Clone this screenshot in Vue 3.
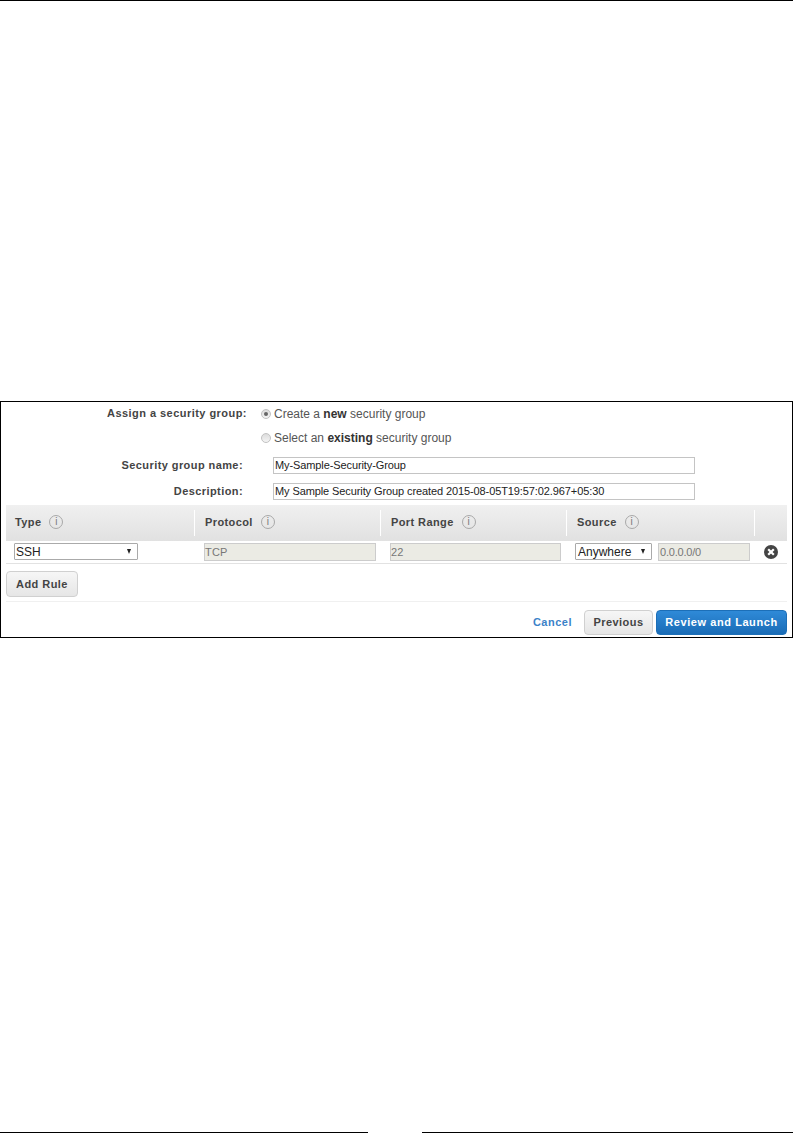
<template>
  <div class="page">
    <div class="top-rule"></div>
    <div class="frame">
      <div class="form-row radio-row first">
        <label class="field-label wide">Assign a security group:</label>
        <span class="radio checked"></span>
        <span class="radio-text">Create a <b>new</b> security group</span>
      </div>
      <div class="form-row radio-row second">
        <span class="field-label wide"></span>
        <span class="radio"></span>
        <span class="radio-text">Select an <b>existing</b> security group</span>
      </div>
      <div class="form-row input-row name-row">
        <label class="field-label">Security group name:</label>
        <div class="text-input">{{ groupName }}</div>
      </div>
      <div class="form-row input-row">
        <label class="field-label">Description:</label>
        <div class="text-input">{{ description }}</div>
      </div>

      <div class="rules-head">
        <div v-for="col in columns" :key="col.cls" class="head-cell" :class="col.cls">
          <span class="head-name">{{ col.name }}</span>
          <span v-if="col.name" class="info">i</span>
        </div>
      </div>
      <div class="rules-row">
        <div class="cell col-type">
          <div class="select type-select"><span>SSH</span><i class="caret"></i></div>
        </div>
        <div class="cell col-protocol"><div class="readonly">TCP</div></div>
        <div class="cell col-port"><div class="readonly port">22</div></div>
        <div class="cell col-source">
          <div class="select source-select"><span>Anywhere</span><i class="caret"></i></div>
          <div class="readonly cidr">0.0.0.0/0</div>
        </div>
        <div class="cell col-remove">
          <svg class="remove" viewBox="0 0 14 14">
            <circle cx="7" cy="7" r="7" fill="#444"/>
            <path d="M4.2 4.2l5.6 5.6M9.8 4.2l-5.6 5.6" stroke="#fff" stroke-width="2.2" fill="none"/>
          </svg>
        </div>
      </div>
      <div class="add-row">
        <button class="btn add-btn">Add Rule</button>
      </div>
      <div class="actions">
        <a class="cancel">Cancel</a>
        <button class="btn prev-btn">Previous</button>
        <button class="btn launch-btn">Review and Launch</button>
      </div>
    </div>
    <div class="bottom-rule">
      <span></span>
      <span></span>
    </div>
  </div>
</template>

<script setup>
const groupName = 'My-Sample-Security-Group'
const description = 'My Sample Security Group created 2015-08-05T19:57:02.967+05:30'

const columns = [
  { name: 'Type', cls: 'col-type' },
  { name: 'Protocol', cls: 'col-protocol' },
  { name: 'Port Range', cls: 'col-port' },
  { name: 'Source', cls: 'col-source' },
  { name: '', cls: 'col-remove' }
]
</script>

<style scoped>
.page {
  width: 793px;
  height: 1142px;
  display: flex;
  flex-direction: column;
  background: #fff;
  font-family: "Liberation Sans", Arial, sans-serif;
  font-size: 11px;
  color: #444;
  overflow: hidden;
}

.top-rule {
  height: 1px;
  background: #000;
}

.frame {
  box-sizing: border-box;
  width: 793px;
  height: 237px;
  margin-top: 400px;
  border: 1px solid #000;
  padding: 0 5px;
}

.form-row {
  display: flex;
  align-items: center;
}

.field-label {
  width: 237px;
  padding-bottom: 2px;
  text-align: right;
  font-weight: bold;
  color: #444;
  letter-spacing: 0.42px;
  flex: none;
}

.field-label.wide {
  width: 241px;
  letter-spacing: 0.46px;
}

.radio-row {
  height: 16px;
}

.radio-row.first {
  margin-top: 4px;
}

.radio-row.second {
  margin-top: 8px;
}

.radio {
  box-sizing: border-box;
  width: 10px;
  height: 10px;
  margin-left: 14px;
  border-radius: 50%;
  border: 1px solid #c2c2c2;
  background: linear-gradient(#dcdcdc, #f4f4f4);
  flex: none;
  position: relative;
}

.radio.checked::after {
  content: "";
  position: absolute;
  left: 2px;
  top: 2px;
  width: 4px;
  height: 4px;
  border-radius: 50%;
  background: #666;
}

.radio-text {
  margin-left: 3px;
  font-size: 12px;
  color: #555;
}

.radio-text b {
  color: #333;
}

.input-row {
  height: 17px;
  margin-top: 9px;
}

.name-row {
  margin-top: 11px;
}

.text-input {
  box-sizing: border-box;
  width: 422px;
  height: 17px;
  margin-left: 30px;
  padding: 0 1px;
  line-height: 15px;
  border: 1px solid #c4c4c4;
  color: #222;
  letter-spacing: -0.1px;
}

.rules-head {
  display: flex;
  height: 36px;
  margin-top: 5px;
  background: linear-gradient(#f0f0f0, #e1e1e1);
}

.head-cell {
  display: flex;
  align-items: center;
  box-sizing: border-box;
  height: 26px;
  margin-top: 5px;
  padding-left: 10px;
  padding-bottom: 2px;
  border-right: 1px solid #fff;
}

.head-cell.col-type {
  padding-left: 9px;
}

.head-name {
  font-weight: bold;
  color: #444;
  letter-spacing: 0.4px;
}

.info {
  box-sizing: border-box;
  width: 14px;
  height: 14px;
  margin-left: 8px;
  border: 1px solid #a8a8a8;
  border-radius: 50%;
  font: 10px/12px "Liberation Sans", Arial, sans-serif;
  text-align: center;
  color: #777;
}

.col-type { width: 189px; }
.col-protocol { width: 186px; }
.col-port { width: 186px; }
.col-source { width: 188px; }
.col-remove { width: 32px; border-right: 0; }

.rules-row {
  display: flex;
  height: 23px;
  border-bottom: 1px solid #e2e2e2;
  box-sizing: border-box;
}

.cell {
  display: flex;
  padding-top: 2px;
  padding-left: 9px;
  box-sizing: border-box;
}

.cell.col-type,
.cell.col-source {
  padding-left: 8px;
}

.select {
  box-sizing: border-box;
  display: flex;
  align-items: center;
  justify-content: space-between;
  height: 17px;
  padding: 0 6px 0 1px;
  border: 1px solid #aaa;
  border-radius: 1px;
  font-size: 12px;
  color: #222;
}

.source-select { padding-left: 2px; }

.type-select { width: 124px; }
.source-select { width: 77px; flex: none; }

.caret {
  width: 0;
  height: 0;
  border-left: 2.5px solid transparent;
  border-right: 2.5px solid transparent;
  border-top: 5px solid #222;
}

.readonly {
  box-sizing: border-box;
  width: 172px;
  height: 18px;
  line-height: 16px;
  border: 1px solid #ccc;
  background: #ebebe4;
  color: #777;
  letter-spacing: 0.2px;
}

.readonly.port {
  width: 171px;
}

.cidr {
  width: 92px;
  margin-left: 6px;
  padding-left: 1px;
  flex: none;
  letter-spacing: -0.2px;
}

.cell.col-remove {
  padding: 4px 0 0 9px;
}

.remove {
  width: 14px;
  height: 14px;
}

.add-row {
  height: 38px;
  padding-top: 7px;
  box-sizing: border-box;
  border-bottom: 1px solid #f0f0f0;
}

.btn {
  box-sizing: border-box;
  border: 1px solid #d0d0d0;
  border-radius: 4px;
  padding: 0;
  background: linear-gradient(#f6f6f6, #e6e6e6);
  font: bold 11px "Liberation Sans", Arial, sans-serif;
  letter-spacing: 0.45px;
  color: #444;
}

.add-btn {
  width: 72px;
  height: 26px;
}

.actions {
  display: flex;
  align-items: center;
  justify-content: flex-end;
  margin-top: 8px;
}

.cancel {
  padding-bottom: 2px;
  font-weight: bold;
  color: #3b82c8;
  letter-spacing: 0.5px;
  margin-right: 12px;
}

.prev-btn {
  width: 69px;
  height: 25px;
  margin-right: 3px;
  padding-bottom: 2px;
}

.launch-btn {
  width: 131px;
  height: 25px;
  padding-bottom: 2px;
  border-color: #1c6fb8;
  background: linear-gradient(#2f8ad8, #1a6cb6);
  color: #fff;
  letter-spacing: 0.57px;
}

.bottom-rule {
  display: flex;
  justify-content: space-between;
  margin-top: auto;
  margin-bottom: 9px;
}

.bottom-rule span {
  height: 1px;
  background: #000;
}

.bottom-rule span:first-child { width: 368px; }
.bottom-rule span:last-child { width: 371px; }
</style>
